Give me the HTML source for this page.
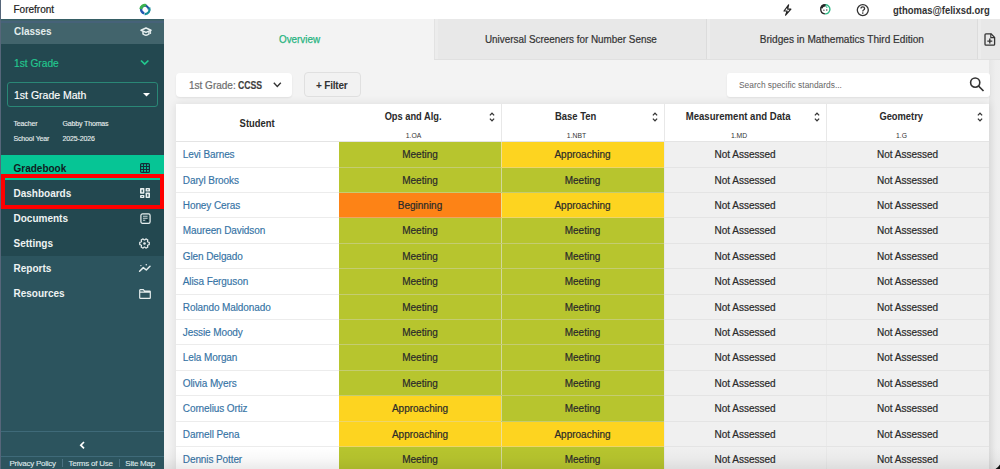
<!DOCTYPE html>
<html><head><meta charset="utf-8">
<style>
*{margin:0;padding:0;box-sizing:border-box}
html,body{width:1000px;height:469px;overflow:hidden;background:#f3f3f3;font-family:"Liberation Sans",sans-serif}
body{position:relative}
.a{position:absolute}
.t{position:absolute;white-space:nowrap;line-height:1}
svg{position:absolute;overflow:visible}
.nav{position:absolute;left:13.5px;font-size:10px;color:#eef3f3;font-weight:bold;white-space:nowrap;line-height:1}
/*ROWH=25.4;ROW0=37.7*/
#tbl{position:absolute;left:176px;top:104px;width:813px;height:380px;background:#fff;box-shadow:0 0 9px rgba(0,0,0,0.10)}
.row{position:absolute;left:0;width:813px}
.c{position:absolute;top:0;bottom:0;text-align:center;font-size:10px;color:#2a2a2a;-webkit-text-stroke:0.2px #2a2a2a;line-height:10px;white-space:nowrap;border-bottom:1px solid rgba(215,215,215,0.4)}
.nm{position:absolute;left:0;top:0;bottom:0;width:163px;padding-left:6.8px;font-size:10px;letter-spacing:-0.1px;color:#3573a5;-webkit-text-stroke:0.15px #3573a5;line-height:10px;white-space:nowrap;border-bottom:1px solid #ececec}
.c1{left:163px;width:162px}
.c2{left:325px;width:163px;box-shadow:inset 1px 0 0 rgba(228,228,228,0.6)}
.c3{left:488px;width:162px;box-shadow:inset 1px 0 0 rgba(228,228,228,0.6)}
.c4{left:650px;width:163px;box-shadow:inset 1px 0 0 rgba(228,228,228,0.6)}
.M{background:#b7c52e}
.A{background:#fdd420}
.B{background:#fd8316}
.N{background:#f0f0f0;border-bottom-color:#e4e4e4}
.th{position:absolute;top:0;height:37.5px;border-bottom:1px solid #e4e4e4}
.sx{display:inline-block;transform-origin:50% 50%}
.thn{position:absolute;left:0;right:14px;top:6.8px;text-align:center;font-size:10.8px;font-weight:bold;color:#2a2a2a;line-height:1}
.ths{position:absolute;left:0;right:13px;top:28.5px;text-align:center;font-size:6.8px;color:#333;line-height:1}
.sort{position:absolute;top:7.6px;right:6.5px;width:6px;height:10px}
</style></head>
<body>
<!-- header -->
<div class="a" style="left:0;top:0;width:1000px;height:19px;background:#fff"></div>
<div class="t" style="left:13.5px;top:4.5px;font-size:10px;color:#222;-webkit-text-stroke:0.2px #222">Forefront</div>
<svg style="left:138.5px;top:3px" width="13" height="13" viewBox="0 0 13 13">
  <path d="M5.32 10.34 A3.9 3.9 0 1 1 7.95 3.12" fill="none" stroke="#2157b3" stroke-width="2.4"/>
  <path d="M7.23 3.12 A3.6 3.6 0 0 1 9.60 6.50" fill="none" stroke="#1d4e9e" stroke-width="1.8"/>
  <path d="M10.17 4.56 A4.6 4.6 0 0 1 5.60 11.08" fill="none" stroke="#168e98" stroke-width="2.2"/>
  <path d="M1.72 6.13 A4.3 4.3 0 0 1 7.11 2.35" fill="none" stroke="#3bb24f" stroke-width="2.8"/>
</svg>
<!-- header right icons -->
<svg style="left:783px;top:3.5px" width="10" height="12" viewBox="0 0 10 12"><path d="M5.6 0.9 L1 7 L4.2 7 L2.6 11.2 L7.9 5.1 L4.6 5.1 Z" fill="none" stroke="#222" stroke-width="1.2" stroke-linejoin="round"/></svg>
<svg style="left:819.8px;top:3.9px" width="11" height="11" viewBox="0 0 11 11"><path d="M4.90 9.88 A4.6 4.6 0 0 1 4.90 0.72" fill="none" stroke="#262626" stroke-width="1.4"/><path d="M4.90 0.72 A4.6 4.6 0 1 1 4.90 9.88" fill="none" stroke="#2fba86" stroke-width="1.4"/><path d="M1.44 4.26 A4.0 4.0 0 0 1 5.65 1.32" fill="none" stroke="#262626" stroke-width="2.2"/><path d="M5.6 2.4 Q7.2 2.6 7.0 4.0" fill="none" stroke="#2fba86" stroke-width="1"/><circle cx="3.9" cy="6.2" r="0.65" fill="#262626"/><circle cx="6.8" cy="6.0" r="0.65" fill="#262626"/></svg>
<svg style="left:855.5px;top:4px" width="14" height="13" viewBox="0 0 14 13"><circle cx="6.8" cy="6.1" r="5.5" fill="none" stroke="#333" stroke-width="1.3"/><path d="M5 4.6 Q5 2.9 6.8 2.9 Q8.6 2.9 8.6 4.5 Q8.6 5.5 7.6 6 Q6.8 6.4 6.8 7.4" fill="none" stroke="#333" stroke-width="1.3"/><circle cx="6.8" cy="9.1" r="0.8" fill="#333"/></svg>
<div class="t" style="left:893.3px;top:4.8px;font-size:10.6px;font-weight:bold;color:#333"><span class="sx" style="transform:scaleX(0.895);transform-origin:0 0">gthomas@felixsd.org</span></div>

<!-- sidebar -->
<div class="a" style="left:0;top:19px;width:164px;height:450px;background:#2c545e"></div>
<div class="a" style="left:0;top:19px;width:164px;height:24.5px;background:#42646c"></div>
<div class="a" style="left:0;top:19px;width:164px;height:1px;background:#365e65"></div>
<div class="a" style="left:0;top:21px;width:164px;height:1.5px;background:#466279"></div>
<div class="a" style="left:0;top:43.5px;width:164px;height:212px;background:#234850"></div>
<div class="nav" style="top:26.3px;font-size:11.5px;color:#e4eeee"><span class="sx" style="transform:scaleX(0.865);transform-origin:0 0">Classes</span></div>
<svg style="left:139.5px;top:27px" width="12" height="10" viewBox="0 0 12 10"><path d="M1 3.2 L6 1 L11 3.2 L6 5.4 Z" fill="none" stroke="#e8f0f0" stroke-width="1.5" stroke-linejoin="round"/><path d="M3 4.3 L3 7 Q6 9.5 9 7 L9 4.3" fill="none" stroke="#e8f0f0" stroke-width="1.5"/><path d="M10.6 3.4 L10.6 7" stroke="#e8f0f0" stroke-width="1"/></svg>
<div class="t" style="left:14px;top:59px;font-size:10.2px;color:#22c98f;-webkit-text-stroke:0.15px #22c98f">1st Grade</div>
<svg style="left:140px;top:59px" width="10" height="7"><path d="M1 1.5 L4.7 5 L8.4 1.5" fill="none" stroke="#22c98f" stroke-width="1.7"/></svg>
<div class="a" style="left:7px;top:81.5px;width:150.5px;height:25px;border:1px solid #2a8776;border-radius:3px;background:#234850"></div>
<div class="t" style="left:14px;top:89.5px;font-size:10.5px;color:#fff;-webkit-text-stroke:0.15px #fff">1st Grade Math</div>
<svg style="left:143px;top:93px" width="8" height="5"><path d="M0 0 L7 0 L3.5 3.5 Z" fill="#fff"/></svg>
<div class="t" style="left:13.5px;top:120px;font-size:7px;color:#e8eeee;letter-spacing:-0.15px;-webkit-text-stroke:0.12px #e8eeee">Teacher</div>
<div class="t" style="left:62.5px;top:120px;font-size:7px;color:#e8eeee;letter-spacing:-0.15px;-webkit-text-stroke:0.12px #e8eeee">Gabby Thomas</div>
<div class="t" style="left:13.5px;top:135px;font-size:7px;color:#e8eeee;letter-spacing:-0.15px;-webkit-text-stroke:0.12px #e8eeee">School Year</div>
<div class="t" style="left:62.5px;top:135px;font-size:7px;color:#e8eeee;letter-spacing:-0.15px;-webkit-text-stroke:0.12px #e8eeee">2025-2026</div>
<div class="a" style="left:0;top:154.9px;width:164px;height:25.6px;background:#06c595"></div>
<div class="nav" style="top:163.5px;color:#0f1d22">Gradebook</div>
<svg style="left:140px;top:163px" width="10" height="10" viewBox="0 0 10 10"><rect x="0.6" y="0.6" width="8.8" height="8.8" rx="1" fill="none" stroke="#14303a" stroke-width="1.2"/><path d="M3.5 0.6 V9.4 M6.5 0.6 V9.4 M0.6 3.5 H9.4 M0.6 6.5 H9.4" stroke="#14303a" stroke-width="1.1"/></svg>
<div class="nav" style="top:188.5px">Dashboards</div>
<svg style="left:140px;top:188px" width="10" height="10" viewBox="0 0 10 10"><rect x="0" y="0" width="4.4" height="5.8" rx="0.7" fill="#e6eeee"/><rect x="5.6" y="0" width="4.4" height="3.6" rx="0.7" fill="#e6eeee"/><rect x="0" y="7" width="4.4" height="3" rx="0.7" fill="#e6eeee"/><rect x="5.6" y="4.6" width="4.4" height="5.4" rx="0.7" fill="#e6eeee"/><rect x="1.6" y="1.6" width="1.2" height="2.6" rx="0.5" fill="#234850"/><rect x="7.2" y="1.3" width="1.2" height="1" fill="#234850"/><rect x="1.7" y="8" width="1" height="1" fill="#234850"/><rect x="7.2" y="6.1" width="1.2" height="2.6" rx="0.5" fill="#234850"/></svg>
<div class="nav" style="top:213.5px">Documents</div>
<svg style="left:139.5px;top:212.8px" width="11" height="11" viewBox="0 0 11 11"><rect x="0.9" y="0.9" width="9.2" height="9.4" rx="1.6" fill="none" stroke="#e6eeee" stroke-width="1.25"/><path d="M3 3.3 H7.6 M3 5.3 H7.6 M3 7.3 H5.2" stroke="#c9d3d5" stroke-width="1.1"/><rect x="6.6" y="6.6" width="1.6" height="1.6" fill="#10232a"/></svg>
<div class="nav" style="top:238.5px">Settings</div>
<svg style="left:139.3px;top:237.6px" width="11" height="11" viewBox="0 0 11 11"><path d="M8.88 4.00 L10.27 4.40 L10.27 6.60 L8.88 7.00 L8.49 7.67 L8.84 9.08 L6.93 10.19 L5.89 9.18 L5.11 9.18 L4.07 10.19 L2.16 9.08 L2.51 7.67 L2.12 7.00 L0.73 6.60 L0.73 4.40 L2.12 4.00 L2.51 3.33 L2.16 1.92 L4.07 0.81 L5.11 1.82 L5.89 1.82 L6.93 0.81 L8.84 1.92 L8.49 3.33 Z" fill="none" stroke="#e6eeee" stroke-width="1.2" stroke-linejoin="round"/><circle cx="5.5" cy="5.5" r="1.3" fill="#e6eeee"/></svg>
<div class="nav" style="top:263.5px">Reports</div>
<svg style="left:134px;top:258px" width="22" height="20" viewBox="134 258 22 20"><path d="M139.6 271.3 L143.3 267.6 L146.3 270 L150 266.3" fill="none" stroke="#e6eeee" stroke-width="1.5" stroke-linejoin="round" stroke-linecap="round"/><circle cx="140.9" cy="265.6" r="0.7" fill="#e6eeee"/><circle cx="146.3" cy="264.8" r="0.8" fill="#e6eeee"/></svg>
<div class="nav" style="top:288.5px">Resources</div>
<svg style="left:139px;top:288.8px" width="12" height="10" viewBox="0 0 12 10"><path d="M0.7 1.3 Q0.7 0.7 1.3 0.7 L4.3 0.7 L5.4 2 L10.7 2 Q11.3 2 11.3 2.6 L11.3 8.7 Q11.3 9.3 10.7 9.3 L1.3 9.3 Q0.7 9.3 0.7 8.7 Z M0.7 3.2 H11.3" fill="none" stroke="#e6eeee" stroke-width="1.2"/></svg>
<div class="a" style="left:1px;top:174.2px;width:163px;height:34.7px;border:4.1px solid #fe0000"></div>
<!-- sidebar bottom -->
<div class="a" style="left:0;top:431px;width:164px;height:1px;background:#3f6a79"></div>
<div class="a" style="left:0;top:456px;width:164px;height:1px;background:#3f6a79"></div>
<svg style="left:79px;top:440.5px" width="7" height="9"><path d="M5 1 L1.8 4.2 L5 7.4" fill="none" stroke="#fff" stroke-width="1.7"/></svg>
<div class="t" style="left:9.5px;top:459.8px;font-size:8px;letter-spacing:-0.25px;color:#dfe8ea;-webkit-text-stroke:0.12px #dfe8ea">Privacy Policy</div>
<div class="a" style="left:62px;top:459px;width:1px;height:8px;background:#4a7282"></div>
<div class="t" style="left:68.5px;top:459.8px;font-size:8px;letter-spacing:-0.25px;color:#dfe8ea;-webkit-text-stroke:0.12px #dfe8ea">Terms of Use</div>
<div class="a" style="left:119px;top:459px;width:1px;height:8px;background:#4a7282"></div>
<div class="t" style="left:125.3px;top:459.8px;font-size:8px;letter-spacing:-0.25px;color:#dfe8ea;-webkit-text-stroke:0.12px #dfe8ea">Site Map</div>
<div class="a" style="left:0;top:0;width:1px;height:469px;background:#56667a"></div>

<!-- tabs -->
<div class="a" style="left:434px;top:19px;width:566px;height:40.5px;background:#e8e8e8"></div>
<div class="a" style="left:434px;top:19px;width:1px;height:40.5px;background:#e2e2e2"></div>
<div class="a" style="left:435px;top:19px;width:3px;height:40.5px;background:#ececec"></div>
<div class="a" style="left:706px;top:19px;width:1px;height:40.5px;background:#dcdcdc"></div>
<div class="a" style="left:707px;top:19px;width:3px;height:40.5px;background:#ececec"></div>
<div class="a" style="left:977px;top:19px;width:1px;height:40.5px;background:#dcdcdc"></div>
<div class="a" style="left:978px;top:19px;width:3px;height:40.5px;background:#ececec"></div>
<div class="a" style="left:434px;top:58.5px;width:566px;height:1px;background:#e0e0e0"></div>
<div class="t" style="left:164px;width:270px;text-align:center;top:33.5px;font-size:10.8px;color:#27b37f;-webkit-text-stroke:0.25px #27b37f"><span class="sx" style="transform:scaleX(0.913)">Overview</span></div>
<div class="t" style="left:435px;width:271px;text-align:center;top:33.6px;font-size:10.8px;color:#333;-webkit-text-stroke:0.2px #333"><span class="sx" style="transform:scaleX(0.915)">Universal Screeners for Number Sense</span></div>
<div class="t" style="left:707px;width:270px;text-align:center;top:33.6px;font-size:10.8px;color:#333;-webkit-text-stroke:0.2px #333"><span class="sx" style="transform:scaleX(0.935)">Bridges in Mathematics Third Edition</span></div>
<svg style="left:984px;top:33px" width="12" height="13" viewBox="0 0 12 13"><path d="M1 1.8 Q1 0.8 2 0.8 L7 0.8 L10.6 4.4 L10.6 11.2 Q10.6 12.2 9.6 12.2 L2 12.2 Q1 12.2 1 11.2 Z" fill="none" stroke="#333" stroke-width="1.3" stroke-linejoin="round"/><path d="M6.8 0.8 L6.8 4.6 L10.6 4.6" fill="none" stroke="#333" stroke-width="1.1"/><path d="M5.8 5.6 V10.6 M3.3 8.1 H8.3" stroke="#333" stroke-width="1.35"/></svg>

<!-- toolbar -->
<div class="a" style="left:989px;top:59.5px;width:11px;height:410px;background:linear-gradient(to right,#e6e6e6,#eeeeee 60%,#efefef)"></div>
<div class="a" style="left:176px;top:72.5px;width:115.5px;height:24.5px;background:#fff;border-radius:4px;box-shadow:0 1px 2px rgba(0,0,0,0.08)"></div>
<div class="t" style="left:189px;top:81px;font-size:10px;color:#6e6e6e;-webkit-text-stroke:0.2px #6e6e6e">1st Grade: <b class="sx" style="color:#3a3a3a;transform:scaleX(0.87);transform-origin:0 0">CCSS</b></div>
<svg style="left:273px;top:82px" width="9" height="6"><path d="M0.8 0.8 L4.3 4.4 L7.8 0.8" fill="none" stroke="#333" stroke-width="1.4"/></svg>
<div class="a" style="left:304px;top:72.3px;width:56.5px;height:25px;background:#f2f2f2;border:1px solid #e0e0e0;border-radius:4px"></div>
<div class="t" style="left:316px;top:81px;font-size:10px;font-weight:bold;color:#333;letter-spacing:-0.2px">+ Filter</div>
<div class="a" style="left:727px;top:72.7px;width:262.5px;height:24px;background:#fff;border-radius:3px;box-shadow:0 1px 2px rgba(0,0,0,0.08)"></div>
<div class="t" style="left:739px;top:81.3px;font-size:8.4px;color:#666">Search specific standards...</div>
<svg style="left:969px;top:76px" width="16" height="16" viewBox="0 0 16 16"><circle cx="6.2" cy="6.6" r="4.6" fill="none" stroke="#333" stroke-width="1.6"/><path d="M9.5 10 L14.5 15" stroke="#333" stroke-width="1.7"/></svg>

<!-- table -->
<div id="tbl">
  <div class="th" style="left:0;width:163px"><div class="thn" style="top:14.1px;right:0"><span class="sx" style="transform:scaleX(0.87)">Student</span></div></div>
  <div class="th" style="left:163px;width:162px"><div class="thn"><span class="sx" style="transform:scaleX(0.86)">Ops and Alg.</span></div><div class="ths">1.OA</div><svg class="sort" viewBox="0 0 6 10"><path d="M0.9 3.4 L3 1.1 L5.1 3.4 M0.9 6.6 L3 8.9 L5.1 6.6" fill="none" stroke="#333" stroke-width="1.3"/></svg></div>
  <div class="th" style="left:325px;width:163px;border-left:1px solid #e8e8e8"><div class="thn"><span class="sx" style="transform:scaleX(0.875)">Base Ten</span></div><div class="ths">1.NBT</div><svg class="sort" viewBox="0 0 6 10"><path d="M0.9 3.4 L3 1.1 L5.1 3.4 M0.9 6.6 L3 8.9 L5.1 6.6" fill="none" stroke="#333" stroke-width="1.3"/></svg></div>
  <div class="th" style="left:488px;width:162px;border-left:1px solid #e8e8e8"><div class="thn"><span class="sx" style="transform:scaleX(0.887)">Measurement and Data</span></div><div class="ths">1.MD</div><svg class="sort" viewBox="0 0 6 10"><path d="M0.9 3.4 L3 1.1 L5.1 3.4 M0.9 6.6 L3 8.9 L5.1 6.6" fill="none" stroke="#333" stroke-width="1.3"/></svg></div>
  <div class="th" style="left:650px;width:163px;border-left:1px solid #e8e8e8"><div class="thn"><span class="sx" style="transform:scaleX(0.865)">Geometry</span></div><div class="ths">1.G</div><svg class="sort" viewBox="0 0 6 10"><path d="M0.9 3.4 L3 1.1 L5.1 3.4 M0.9 6.6 L3 8.9 L5.1 6.6" fill="none" stroke="#333" stroke-width="1.3"/></svg></div>
<div class="row" style="top:38px;height:26px"><div class="nm" style="padding-top:8.1px">Levi Barnes</div><div class="c c1 M" style="padding-top:8.1px">Meeting</div><div class="c c2 A" style="padding-top:8.1px">Approaching</div><div class="c c3 N" style="padding-top:8.1px">Not Assessed</div><div class="c c4 N" style="padding-top:8.1px">Not Assessed</div></div>
<div class="row" style="top:64px;height:25px"><div class="nm" style="padding-top:7.5px">Daryl Brooks</div><div class="c c1 M" style="padding-top:7.5px">Meeting</div><div class="c c2 M" style="padding-top:7.5px">Meeting</div><div class="c c3 N" style="padding-top:7.5px">Not Assessed</div><div class="c c4 N" style="padding-top:7.5px">Not Assessed</div></div>
<div class="row" style="top:89px;height:25px"><div class="nm" style="padding-top:7.9px">Honey Ceras</div><div class="c c1 B" style="padding-top:7.9px">Beginning</div><div class="c c2 A" style="padding-top:7.9px">Approaching</div><div class="c c3 N" style="padding-top:7.9px">Not Assessed</div><div class="c c4 N" style="padding-top:7.9px">Not Assessed</div></div>
<div class="row" style="top:114px;height:26px"><div class="nm" style="padding-top:8.3px">Maureen Davidson</div><div class="c c1 M" style="padding-top:8.3px">Meeting</div><div class="c c2 M" style="padding-top:8.3px">Meeting</div><div class="c c3 N" style="padding-top:8.3px">Not Assessed</div><div class="c c4 N" style="padding-top:8.3px">Not Assessed</div></div>
<div class="row" style="top:140px;height:25px"><div class="nm" style="padding-top:7.7px">Glen Delgado</div><div class="c c1 M" style="padding-top:7.7px">Meeting</div><div class="c c2 M" style="padding-top:7.7px">Meeting</div><div class="c c3 N" style="padding-top:7.7px">Not Assessed</div><div class="c c4 N" style="padding-top:7.7px">Not Assessed</div></div>
<div class="row" style="top:165px;height:26px"><div class="nm" style="padding-top:8.1px">Alisa Ferguson</div><div class="c c1 M" style="padding-top:8.1px">Meeting</div><div class="c c2 M" style="padding-top:8.1px">Meeting</div><div class="c c3 N" style="padding-top:8.1px">Not Assessed</div><div class="c c4 N" style="padding-top:8.1px">Not Assessed</div></div>
<div class="row" style="top:191px;height:25px"><div class="nm" style="padding-top:7.5px">Rolando Maldonado</div><div class="c c1 M" style="padding-top:7.5px">Meeting</div><div class="c c2 M" style="padding-top:7.5px">Meeting</div><div class="c c3 N" style="padding-top:7.5px">Not Assessed</div><div class="c c4 N" style="padding-top:7.5px">Not Assessed</div></div>
<div class="row" style="top:216px;height:25px"><div class="nm" style="padding-top:7.9px">Jessie Moody</div><div class="c c1 M" style="padding-top:7.9px">Meeting</div><div class="c c2 M" style="padding-top:7.9px">Meeting</div><div class="c c3 N" style="padding-top:7.9px">Not Assessed</div><div class="c c4 N" style="padding-top:7.9px">Not Assessed</div></div>
<div class="row" style="top:241px;height:26px"><div class="nm" style="padding-top:8.3px">Lela Morgan</div><div class="c c1 M" style="padding-top:8.3px">Meeting</div><div class="c c2 M" style="padding-top:8.3px">Meeting</div><div class="c c3 N" style="padding-top:8.3px">Not Assessed</div><div class="c c4 N" style="padding-top:8.3px">Not Assessed</div></div>
<div class="row" style="top:267px;height:25px"><div class="nm" style="padding-top:7.7px">Olivia Myers</div><div class="c c1 M" style="padding-top:7.7px">Meeting</div><div class="c c2 M" style="padding-top:7.7px">Meeting</div><div class="c c3 N" style="padding-top:7.7px">Not Assessed</div><div class="c c4 N" style="padding-top:7.7px">Not Assessed</div></div>
<div class="row" style="top:292px;height:26px"><div class="nm" style="padding-top:8.1px">Cornelius Ortiz</div><div class="c c1 A" style="padding-top:8.1px">Approaching</div><div class="c c2 M" style="padding-top:8.1px">Meeting</div><div class="c c3 N" style="padding-top:8.1px">Not Assessed</div><div class="c c4 N" style="padding-top:8.1px">Not Assessed</div></div>
<div class="row" style="top:318px;height:25px"><div class="nm" style="padding-top:7.5px">Darnell Pena</div><div class="c c1 A" style="padding-top:7.5px">Approaching</div><div class="c c2 A" style="padding-top:7.5px">Approaching</div><div class="c c3 N" style="padding-top:7.5px">Not Assessed</div><div class="c c4 N" style="padding-top:7.5px">Not Assessed</div></div>
<div class="row" style="top:343px;height:25px"><div class="nm" style="padding-top:7.9px">Dennis Potter</div><div class="c c1 M" style="padding-top:7.9px">Meeting</div><div class="c c2 M" style="padding-top:7.9px">Meeting</div><div class="c c3 N" style="padding-top:7.9px">Not Assessed</div><div class="c c4 N" style="padding-top:7.9px">Not Assessed</div></div>

</div>
<svg style="left:994px;top:463px" width="6" height="6" viewBox="0 0 6 6"><path d="M6 1.5 L6 6 L1.5 6 Q4 4.5 6 1.5 Z" fill="#111"/></svg>
<!-- bottom fade -->
<div class="a" style="left:164px;top:447px;width:836px;height:22px;background:linear-gradient(to bottom,rgba(0,0,0,0),rgba(0,0,0,0.025) 50%,rgba(0,0,0,0.08))"></div>

</body></html>
